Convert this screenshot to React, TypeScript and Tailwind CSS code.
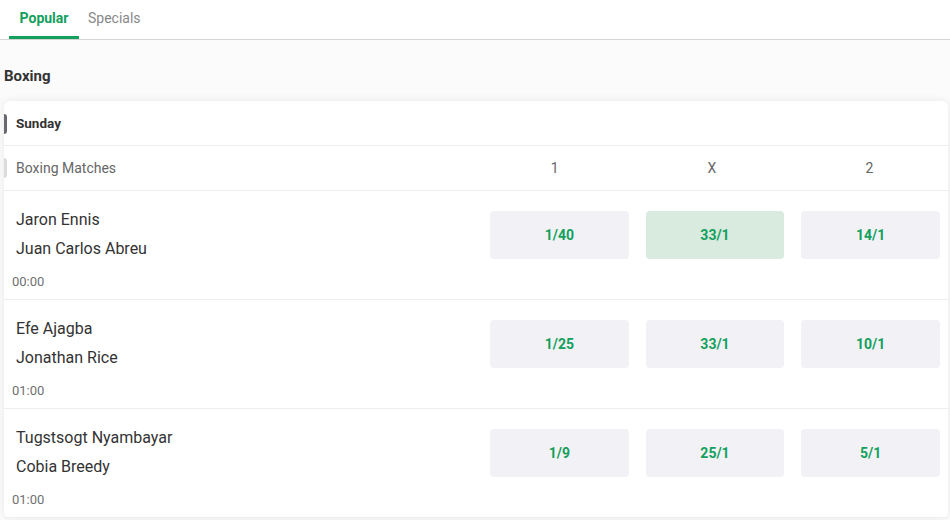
const matches = [
  { home: "Jaron Ennis", away: "Juan Carlos Abreu", time: "00:00", odds: ["1/40", "33/1", "14/1"], active: 1 },
  { home: "Efe Ajagba", away: "Jonathan Rice", time: "01:00", odds: ["1/25", "33/1", "10/1"], active: -1 },
  { home: "Tugstsogt Nyambayar", away: "Cobia Breedy", time: "01:00", odds: ["1/9", "25/1", "5/1"], active: -1 },
];

const App = () => {
  return (
    <div className="w-[950px] h-[520px] overflow-hidden bg-[#fbfbfb] font-['Roboto',sans-serif]">
      <div className="flex h-10 border-b border-[#d4d4d4] bg-white px-[9px]">
        <div className="flex w-[70px] items-center justify-center border-b-[3px] border-[#12a05c] text-sm font-bold text-[#12a05c]">
          Popular
        </div>
        <div className="flex items-center border-b-[3px] border-transparent px-[9px] text-sm text-[#888]">Specials</div>
      </div>

      <h2 className="px-1 pt-[26px] pb-[15px] text-[15px] leading-5 font-bold text-[#333]">Boxing</h2>

      <div className="ml-1 w-[944px] rounded-md bg-white shadow-[0_0_8px_rgba(0,0,0,0.08)]">
        <div className="relative flex h-[45px] items-center border-b border-[#eeeeee] pl-3">
          <span className="absolute left-0 top-[13px] h-5 w-[3px] rounded-r bg-[#686870]" />
          <span className="text-[13.5px] font-bold text-[#333]">Sunday</span>
        </div>
        <div className="relative flex h-[45px] items-center border-b border-[#eeeeee] pl-3">
          <span className="absolute left-0 top-[12px] h-5 w-[3px] rounded-r bg-[#dcdcdc]" />
          <span className="flex-1 text-sm text-[#666]">Boxing Matches</span>
          <div className="grid w-[472px] grid-cols-3 text-center text-sm text-[#666]">
            <span>1</span>
            <span>X</span>
            <span>2</span>
          </div>
        </div>

        {matches.map((m, i) => (
          <div key={i} className="flex h-[109px] border-b border-[#eeeeee]">
            <div className="flex-1 pt-[14px]">
              <div className="pl-3 text-base leading-[29px] text-[#333]">{m.home}</div>
              <div className="pl-3 text-base leading-[29px] text-[#333]">{m.away}</div>
              <div className="pl-2 pt-[10px] text-[13px] leading-[18px] text-[#707070]">{m.time}</div>
            </div>
            <div className="mr-[8px] grid w-[450px] grid-cols-3 gap-[17px] pt-5">
              {m.odds.map((o, j) => (
                <button
                  key={j}
                  className={`h-12 rounded text-sm font-bold text-[#12a05c] ${j === m.active ? "bg-[#d9eadf]" : "bg-[#f2f2f6]"}`}
                >
                  {o}
                </button>
              ))}
            </div>
          </div>
        ))}
      </div>
    </div>
  );
};

export default App;
